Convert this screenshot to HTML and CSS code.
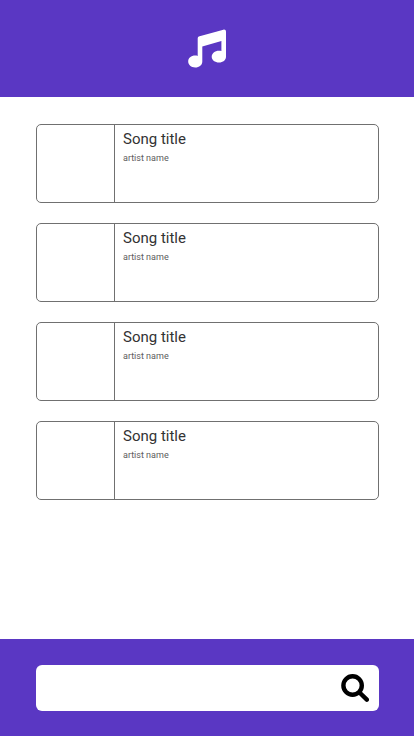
FILE: index.html
```html
<!DOCTYPE html>
<html lang="en">
<head>
<meta charset="utf-8">
<meta name="viewport" content="width=device-width, initial-scale=1">
<title>Songs</title>
<link rel="stylesheet" href="styles.css">
</head>
<body>
<header class="header">
  <svg class="logo" viewBox="0 0 38 38" aria-hidden="true">
    <path fill="#fff" fill-rule="evenodd" d="M11.6 6.3 35.4-.3C36.9-.7 38 .3 38 1.8V26.7C38 30.1 35 32.5 31 32.5S23.7 30 23.7 26.7 26.8 20.7 31 20.7C32 20.7 32.6 20.8 33.4 21V10.9L14.3 16.4V31.4C14.3 34.9 11.3 37.4 7.2 37.4S.2 34.8.2 31.5 3.1 25.6 7.2 25.6C8.2 25.6 8.9 25.7 9.7 25.9V8.6C9.7 7.5 10.4 6.6 11.6 6.3Z"/>
  </svg>
</header>
<main class="songs">
  <article class="song"><div class="cover"></div><div class="info"><h2 class="title">Song title</h2><p class="artist">artist name</p></div></article>
  <article class="song"><div class="cover"></div><div class="info"><h2 class="title">Song title</h2><p class="artist">artist name</p></div></article>
  <article class="song"><div class="cover"></div><div class="info"><h2 class="title">Song title</h2><p class="artist">artist name</p></div></article>
  <article class="song"><div class="cover"></div><div class="info"><h2 class="title">Song title</h2><p class="artist">artist name</p></div></article>
</main>
<footer class="footer">
  <div class="search">
    <svg class="search-icon" viewBox="0 0 28 28" aria-hidden="true">
      <circle cx="11.6" cy="11.5" r="9.2"/>
      <path d="M18.5 18.5 25.8 25.6"/>
    </svg>
  </div>
</footer>
</body>
</html>
```

FILE: styles.css
```css
* { box-sizing: border-box; }
body {
  margin: 0;
  min-height: 100vh;
  display: flex;
  flex-direction: column;
  background: #fff;
  font-family: Roboto, sans-serif;
}
.header {
  height: 97px;
  background: #5a37c3;
  display: flex;
  align-items: center;
  justify-content: center;
}
.logo { width: 38px; height: 38px; overflow: visible; }
.songs {
  flex: 1;
  padding: 27px 35px 0 36px;
  display: flex;
  flex-direction: column;
  gap: 20px;
}
.song {
  height: 79px;
  display: flex;
  border: 1px solid #707070;
  border-radius: 5px;
}
.cover { width: 78px; border-right: 1px solid #707070; }
.info { padding: 5px 8px; }
.title {
  margin: 0;
  font-size: 15px;
  line-height: 18px;
  font-weight: 400;
  color: #333;
}
.artist {
  margin: 5px 0 0;
  font-size: 9px;
  line-height: 11px;
  font-weight: 400;
  color: #5c5c5c;
}
.footer {
  height: 97px;
  padding: 26px 35px 25px 36px;
  background: #5a37c3;
}
.search {
  height: 46px;
  padding-right: 10px;
  border-radius: 6px;
  background: #fff;
  display: flex;
  align-items: center;
  justify-content: flex-end;
}
.search-icon {
  width: 28px;
  height: 28px;
  fill: none;
  stroke: #000;
  stroke-width: 4.4;
  stroke-linecap: round;
}
```
